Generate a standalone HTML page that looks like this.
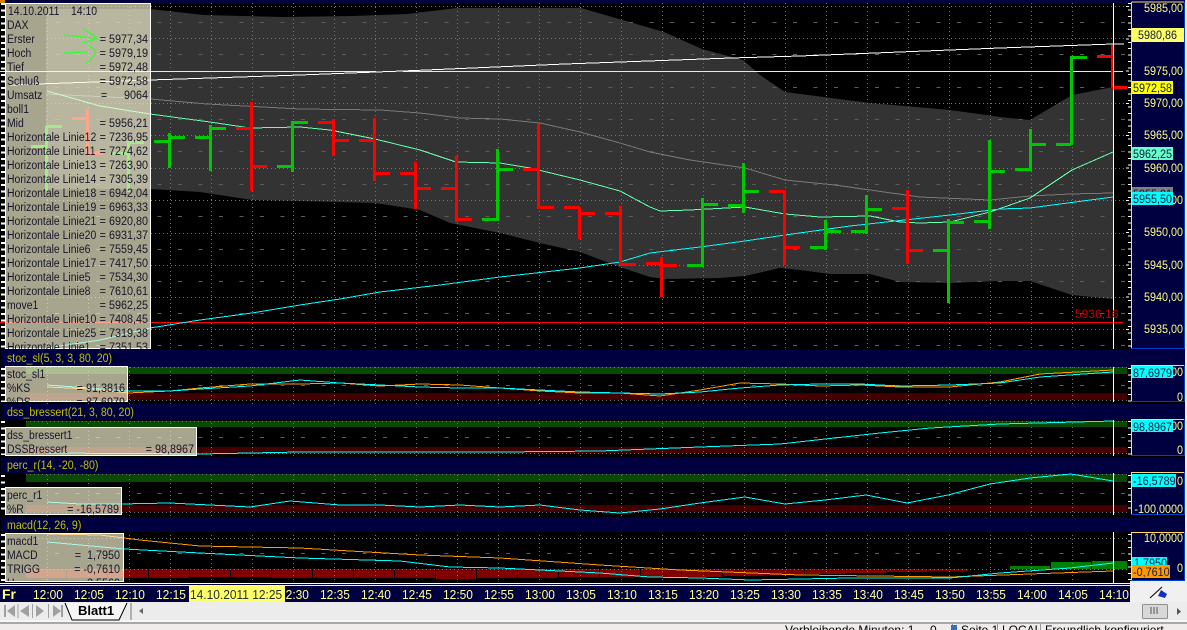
<!DOCTYPE html>
<html><head><meta charset="utf-8"><style>
html,body{margin:0;padding:0;background:#f0f0f0;width:1187px;height:630px;overflow:hidden}
svg{display:block}
text{font-family:"Liberation Sans",sans-serif;font-size:12px;transform-box:fill-box}
.l{fill:#16162a;transform-origin:left center;transform:scaleX(.87)}
.r{fill:#16162a;text-anchor:end;transform-origin:right center;transform:scaleX(.9)}
.h{fill:#c0c000;transform-origin:left center;transform:scaleX(.885)}
.a{fill:#ffff80;text-anchor:end;transform-origin:right center;transform:scaleX(.9)}
.b{fill:#102040;transform-origin:left center;transform:scaleX(.9)}
.t{fill:#ffff90;font-size:13px;text-anchor:middle;transform-origin:center;transform:scaleX(.92)}
.d{fill:#203040;font-size:13px;transform-origin:left center;transform:scaleX(.92)}
.c path,.c polyline,.c line{shape-rendering:crispEdges}
polyline{fill:none}
</style></head><body>
<svg width="1187" height="630" viewBox="0 0 1187 630" xmlns="http://www.w3.org/2000/svg">
<defs>
<clipPath id="c1"><rect x="6" y="4" width="144" height="345"/></clipPath>
<clipPath id="c2"><rect x="6" y="367" width="122" height="35"/></clipPath>
<clipPath id="c3"><rect x="6" y="534" width="118" height="47"/></clipPath>
<clipPath id="c4"><rect x="0" y="586" width="1130" height="16"/></clipPath>
</defs>
<g class="c">
<rect width="1187" height="630" fill="#f0f0f0"/>
<rect x="0" y="0" width="1185" height="583" fill="#000"/>
<rect x="0" y="0" width="1185" height="3" fill="#000040"/>
<rect x="0" y="0" width="5" height="3" fill="#e08000"/>

<!-- main band -->
<polygon fill="#333333" points="46,9 150,9 204,15 283,17 353,16 407,14 457,8 581,8 664,32 702,49 743,60 760,75 785,92 870,103 950,110 1000,117 1030,120 1072,95 1113,87 1113,299 1072,295 1030,281 1000,281 950,283 900,282 870,274 830,274 800,270 780,268 745,276 720,278 665,279 650,277 620,267 580,252 540,243 500,233 450,223 420,210 375,203 300,201 252,200 200,192 150,189 46,189"/>

<!-- indicator bands -->
<rect x="26" y="367" width="1101" height="7" fill="#0a4a00"/>
<rect x="26" y="393" width="1101" height="7" fill="#440000"/>
<rect x="26" y="421" width="1101" height="6" fill="#0a4a00"/>
<rect x="26" y="447" width="1101" height="6" fill="#440000"/>
<rect x="26" y="474" width="1101" height="8" fill="#0a4a00"/>
<rect x="26" y="505" width="1101" height="7" fill="#440000"/>

<!-- histogram -->
<path fill="#800000" d="M26 569h40v9h-40zM67 569h40v9h-40zM108 569h40v9h-40zM149 569h40v9h-40zM190 569h40v8h-40zM231 569h40v8h-40zM272 569h40v9h-40zM313 569h40v9h-40zM354 569h40v9h-40zM395 569h40v9h-40zM436 569h40v10h-40zM477 569h40v9h-40zM518 569h40v9h-40zM559 569h40v8h-40zM600 569h40v8h-40zM641 569h40v8h-40zM682 569h40v8h-40zM723 569h40v7h-40zM764 569h40v6h-40zM805 569h40v5h-40zM846 569h40v4h-40zM887 569h40v3h-40zM928 569h40v2h-40z"/>
<path fill="#008000" d="M1010 566h40v3h-40zM1051 562h40v7h-40zM1092 561h35v8h-35z"/>

<!-- grid -->
<path stroke="#777" fill="none" stroke-dasharray="1 3" d="M47.5 3V583M88.5 3V583M129.5 3V583M170.5 3V583M211.5 3V583M252.5 3V583M293.5 3V583M334.5 3V583M375.5 3V583M416.5 3V583M457.5 3V583M498.5 3V583M539.5 3V583M580.5 3V583M621.5 3V583M662.5 3V583M703.5 3V583M744.5 3V583M785.5 3V583M826.5 3V583M867.5 3V583M908.5 3V583M949.5 3V583M990.5 3V583M1031.5 3V583M1072.5 3V583"/>
<path stroke="#777" fill="none" stroke-dasharray="1 3" d="M47 6.5H1127M47 38.5H1127M47 103.5H1127M47 135.5H1127M47 168.5H1127M47 200.5H1127M47 233.5H1127M47 265.5H1127M47 297.5H1127M47 329.5H1127M26 400.5H1127M26 453.5H1127M26 367.5H1127M26 512.5H1127M26 538.5H1127M26 569.5H1127M26 421.5H1127M26 474.5H1127"/>
<path stroke="#5c5c5c" fill="none" stroke-dasharray="4 16.5" d="M55 22.5H1127M55 54.5H1127M55 87.5H1127M55 119.5H1127M55 151.5H1127M55 184.5H1127M55 216.5H1127M55 249.5H1127M55 281.5H1127M55 313.5H1127M55 345.5H1127M55 385.5H1127M55 437.5H1127M55 493.5H1127M55 553.5H1127"/>

<!-- headers -->
<rect x="1" y="350" width="1184" height="17" fill="#000040"/>
<rect x="1" y="404" width="1184" height="16" fill="#000040"/>
<rect x="1" y="457" width="1184" height="16" fill="#000040"/>
<rect x="1" y="517" width="1184" height="15" fill="#000040"/>

<!-- main white / red lines -->
<path stroke="#e8e8e8" d="M0 71.5H376M403 71.5H1123"/>
<polyline stroke="#fff" points="10,85 150,80 300,75 376,72 403,71 565,64 731,58 800,56 1000,48 1113,44 1124,44"/>
<path stroke="#ff0000" d="M0 322.5H1123"/>

<!-- moving lines -->
<polyline stroke="#787878" points="46,94 150,99 207,104 300,109 380,110 420,113 460,118 500,119 540,123 580,132 620,143 650,152 690,160 745,168 785,180 835,185 870,190 920,197 990,200 1030,196 1070,194 1113,193"/>
<polyline stroke="#66ffb0" points="47,91 100,106 150,114 210,122 250,128 300,127 330,130 375,139 420,150 456,162 500,163 530,168 580,180 620,191 650,207 660,211 690,210 745,207 785,214 820,217 870,216 900,222 920,223 950,222 990,212 1030,198 1072,170 1113,152"/>
<polyline stroke="#00ffff" points="47,348 100,340 150,328 200,320 252,313 300,305 340,299 380,292 440,285 500,277 580,268 620,262 650,253 700,247 745,241 785,235 850,226 950,215 1000,209 1030,208 1113,197"/>

<!-- OHLC bars -->
<g fill="none" stroke-width="3">
<path stroke="#00c800" d="M46.5 126V192M31 146.5H46M46 126.5H62M128.5 141V192M113 153.5H128M128 142.5H144M169.5 133V168M154 141.5H169M169 137.5H185M210.5 125V171M195 137.5H210M210 128.5H226M292.5 121V172M277 166.5H292M292 122.5H308M497.5 149V221M482 219.5H497M497 169.5H513M702.5 198V267M687 265.5H702M702 204.5H718M743.5 163V213M728 205.5H743M743 191.5H759M825.5 220V250M810 247.5H825M825 231.5H841M866.5 195V234M851 231.5H866M866 209.5H882M948.5 219V303M933 250.5H948M948 222.5H964M989.5 140V229M974 221.5H989M989 171.5H1005M1030.5 129V171M1015 169.5H1030M1030 144.5H1046M1071.5 56V145M1056 144.5H1071M1071 57.5H1087"/>
<path stroke="#ff0000" d="M87.5 109V155M72 118.5H87M87 153.5H103M251.5 102V191M236 128.5H251M251 166.5H267M333.5 119V156M318 122.5H333M333 140.5H349M374.5 118V181M359 140.5H374M374 173.5H390M415.5 162V209M400 173.5H415M415 188.5H431M456.5 156V222M441 188.5H456M456 219.5H472M538.5 124V209M523 169.5H538M538 207.5H554M579.5 207V239M564 207.5H579M579 213.5H595M620.5 206V265M605 213.5H620M620 264.5H636M661.5 257V297M646 263.5H661M661 265.5H677M784.5 190V265M769 191.5H784M784 247.5H800M907.5 190V264M892 208.5H907M907 250.5H923M1112.5 45V88M1097 56.5H1112M1112 87.5H1127"/>
</g>

<!-- sub-panel lines -->
<polyline stroke="#ff9900" points="47,387 90,389 128,393 170,391 200,388 250,384 300,384 340,383 380,386 420,384 460,385 500,388 540,391 580,393 620,393 660,396 700,390 740,383 780,384 820,386 860,385 900,387 950,387 1000,382 1040,374 1113,370"/>
<polyline stroke="#00ffff" points="47,385 90,388 128,391 170,391 200,389 250,386 300,380 340,383 380,385 420,387 460,388 500,388 540,390 580,392 620,393 660,394 700,392 740,388 780,385 820,384 860,384 900,386 950,385 1000,383 1040,377 1113,372"/>
<polyline stroke="#00ffff" points="47,453 200,454 300,452 500,452 600,451 700,447 780,444 880,433 930,428 1000,424 1113,421"/>
<polyline stroke="#00ffff" points="47,502 80,504 120,504 170,503 210,505 250,507 290,501 340,505 380,505 420,507 460,505 500,507 540,505 580,510 620,513 660,509 700,503 745,497 785,504 825,500 866,495 907,503 948,495 990,484 1030,478 1071,474 1113,481"/>
<polyline stroke="#ff9900" points="47,534 100,535 140,540 200,546 250,547 300,548 350,551 420,555 500,558 600,565 680,570 800,575 950,577 1030,574 1113,571"/>
<polyline stroke="#00ffff" points="47,542 124,549 200,553 300,558 400,561 450,567 500,568 540,570 600,573 650,577 700,578 750,580 850,578 950,578 1000,573 1070,568 1113,563"/>

<!-- cursor -->
<path stroke="#fff" d="M1113.5 3V349M1113.5 367V402M1113.5 420V456M1113.5 473V515M1113.5 532V583"/>
<path stroke="#ff0000" stroke-width="2" d="M1112 46V88"/>
</g>

<text x="1075" y="318" fill="#c00000">5936,16</text>

<!-- ticks -->
<g class="c" fill="none">
<path stroke="#fff" stroke-width="4" stroke-dasharray="2 4.46" d="M3 3V349M3 368V402M3 421V455M3 475V514M3 534V582"/>
<path stroke="#fff" stroke-width="3" stroke-dasharray="1 5.46" d="M1129.5 3V349M1129.5 368V402M1129.5 421V455M1129.5 475V514M1129.5 534V582"/>
<path stroke="#fff" stroke-width="3" stroke-dasharray="1 31.3" d="M1127.5 6V349"/>
</g>

<!-- main overlay -->
<rect x="5.5" y="3.5" width="145" height="345" fill="rgba(255,250,215,.66)" stroke="#fff" shape-rendering="crispEdges"/>
<g clip-path="url(#c1)">
<text class="l" x="8" y="15">14.10.2011</text><text class="l" x="71" y="15">14:10</text>
<text class="l" x="7" y="29">DAX</text>
<text class="l" x="7" y="43">Erster</text><text class="r" x="148" y="43">= 5977,34</text>
<text class="l" x="7" y="57">Hoch</text><text class="r" x="148" y="57">= 5979,19</text>
<text class="l" x="7" y="71">Tief</text><text class="r" x="148" y="71">= 5972,48</text>
<text class="l" x="7" y="85">Schluß</text><text class="r" x="148" y="85">= 5972,58</text>
<text class="l" x="7" y="99">Umsatz</text><text class="l" x="101" y="99">=</text><text class="r" x="148" y="99">9064</text>
<text class="l" x="7" y="113">boll1</text>
<text class="l" x="7" y="127">Mid</text><text class="r" x="148" y="127">= 5956,21</text>
<text class="l" x="7" y="141">Horizontale Linie12</text><text class="r" x="148" y="141">= 7236,95</text>
<text class="l" x="7" y="155">Horizontale Linie11</text><text class="r" x="148" y="155">= 7274,62</text>
<text class="l" x="7" y="169">Horizontale Linie13</text><text class="r" x="148" y="169">= 7263,90</text>
<text class="l" x="7" y="183">Horizontale Linie14</text><text class="r" x="148" y="183">= 7305,39</text>
<text class="l" x="7" y="197">Horizontale Linie18</text><text class="r" x="148" y="197">= 6942,04</text>
<text class="l" x="7" y="211">Horizontale Linie19</text><text class="r" x="148" y="211">= 6963,33</text>
<text class="l" x="7" y="225">Horizontale Linie21</text><text class="r" x="148" y="225">= 6920,80</text>
<text class="l" x="7" y="239">Horizontale Linie20</text><text class="r" x="148" y="239">= 6931,37</text>
<text class="l" x="7" y="253">Horizontale Linie6</text><text class="r" x="148" y="253">= 7559,45</text>
<text class="l" x="7" y="267">Horizontale Linie17</text><text class="r" x="148" y="267">= 7417,50</text>
<text class="l" x="7" y="281">Horizontale Linie5</text><text class="r" x="148" y="281">= 7534,30</text>
<text class="l" x="7" y="295">Horizontale Linie8</text><text class="r" x="148" y="295">= 7610,61</text>
<text class="l" x="7" y="309">move1</text><text class="r" x="148" y="309">= 5962,25</text>
<text class="l" x="7" y="323">Horizontale Linie10</text><text class="r" x="148" y="323">= 7408,45</text>
<text class="l" x="7" y="337">Horizontale Linie25</text><text class="r" x="148" y="337">= 7319,38</text>
<text class="l" x="7" y="351">Horizontale Linie1</text><text class="r" x="148" y="351">= 7351,53</text>
</g>
<g fill="none" stroke="#33ff33" stroke-width="1.3">
<path d="M64 35L97 38.500M83 29Q91 33 97 38.500Q90 41 82 43"/>
<path d="M64 53L88 52M88 46Q98 50 95 54Q92 59 86 63"/>
</g>

<!-- headers text -->
<text class="h" x="7" y="362">stoc_sl(5, 3, 3, 80, 20)</text>
<text class="h" x="7" y="416">dss_bressert(21, 3, 80, 20)</text>
<text class="h" x="7" y="469">perc_r(14, -20, -80)</text>
<text class="h" x="7" y="529">macd(12, 26, 9)</text>

<!-- sub overlays -->
<rect x="5.5" y="366.5" width="122" height="35" fill="rgba(255,250,215,.66)" stroke="#fff" shape-rendering="crispEdges"/>
<g clip-path="url(#c2)">
<text class="l" x="7" y="378">stoc_sl1</text>
<text class="l" x="7" y="392">%KS</text><text class="r" x="125" y="392">= 91,3816</text>
<text class="l" x="7" y="406">%DS</text><text class="r" x="125" y="406">= 87,6979</text>
</g>
<rect x="5.5" y="427.500" width="191" height="28" fill="rgba(255,250,215,.66)" stroke="#fff" shape-rendering="crispEdges"/>
<text class="l" x="7" y="439">dss_bressert1</text>
<text class="l" x="7" y="453">DSSBressert</text><text class="r" x="194" y="453">= 98,8967</text>
<rect x="5.5" y="487.500" width="116" height="27" fill="rgba(255,250,215,.66)" stroke="#fff" shape-rendering="crispEdges"/>
<text class="l" x="7" y="499">perc_r1</text>
<text class="l" x="7" y="513">%R</text><text class="r" x="119" y="513">= -16,5789</text>
<rect x="5.5" y="533.500" width="118" height="48" fill="rgba(255,250,215,.66)" stroke="#fff" shape-rendering="crispEdges"/>
<g clip-path="url(#c3)">
<text class="l" x="7" y="545">macd1</text>
<text class="l" x="7" y="559">MACD</text><text class="r" x="120" y="559">=&#160;&#160;1,7950</text>
<text class="l" x="7" y="573">TRIGG</text><text class="r" x="120" y="573">= -0,7610</text>
<text class="l" x="7" y="587">H</text><text class="r" x="120" y="587">2,5560</text>
</g>

<!-- right axes -->
<g class="c">
<rect x="1131" y="2" width="54" height="347" fill="#000040"/>
<path fill="none" stroke="#ffd870" d="M1131.5 2V349M1131.5 2H1184"/>
<path fill="none" stroke="#0040d0" d="M1184.5 2V349M1131 348.5H1185"/>
<rect x="1131" y="365" width="54" height="37" fill="#000040"/>
<path fill="none" stroke="#ffd870" d="M1131.5 365V402M1131.5 365.500H1184"/>
<path fill="none" stroke="#0040d0" d="M1184.5 365V402M1131 401.5H1185"/>
<rect x="1131" y="419" width="54" height="37" fill="#000040"/>
<path fill="none" stroke="#ffd870" d="M1131.5 419V456M1131.5 419.500H1184"/>
<path fill="none" stroke="#0040d0" d="M1184.5 419V456M1131 455.5H1185"/>
<rect x="1131" y="472" width="54" height="43" fill="#000040"/>
<path fill="none" stroke="#ffd870" d="M1131.5 472V515M1131.5 472.500H1184"/>
<path fill="none" stroke="#0040d0" d="M1184.5 472V515M1131 514.5H1185"/>
<rect x="1131" y="532" width="54" height="49" fill="#000040"/>
<path fill="none" stroke="#ffd870" d="M1131.5 532V581M1131.5 532.500H1184"/>
<path fill="none" stroke="#0040d0" d="M1184.5 532V581M1131 580.5H1185"/>
</g>

<text class="a" x="1183" y="12">5985,00</text>
<text class="a" x="1183" y="75">5975,00</text>
<text class="a" x="1183" y="107">5970,00</text>
<text class="a" x="1183" y="139">5965,00</text>
<text class="a" x="1183" y="172">5960,00</text>
<text class="a" x="1183" y="204">5955,00</text>
<text class="a" x="1183" y="236">5950,00</text>
<text class="a" x="1183" y="269">5945,00</text>
<text class="a" x="1183" y="301">5940,00</text>
<text class="a" x="1183" y="333">5935,00</text>

<rect x="1132" y="28" width="52" height="14" fill="#ffff66"/>
<text class="b" x="1138" y="39">5980,86</text>
<rect x="1132" y="81" width="41" height="13" fill="#ffff00"/>
<text class="b" x="1133" y="92">5972,58</text>
<rect x="1132" y="147" width="41" height="13" fill="#66ffcc"/>
<text class="b" x="1133" y="158">5962,25</text>
<rect x="1132" y="187" width="41" height="13" fill="#808080"/>
<text class="b" x="1133" y="198">5955,91</text>
<rect x="1132" y="192" width="41" height="13" fill="#00ffff"/>
<text class="b" x="1133" y="203">5955,50</text>

<text class="a" x="1183" y="376">100,0000</text>
<text class="a" x="1183" y="401">0</text>
<rect x="1132" y="366" width="41" height="12" fill="#00ffff"/>
<text class="b" x="1133" y="377">87,6979</text>

<text class="a" x="1183" y="430">100,0000</text>
<text class="a" x="1183" y="454">0</text>
<rect x="1132" y="420" width="41" height="12" fill="#00ffff"/>
<text class="b" x="1133" y="431">98,8967</text>

<text class="a" x="1183" y="485">0</text>
<rect x="1132" y="474" width="44" height="13" fill="#00ffff"/>
<text class="b" x="1133" y="485">-16,5789</text>
<text class="a" x="1183" y="513">-100,0000</text>

<text class="a" x="1183" y="542">10,0000</text>
<text class="a" x="1183" y="572">0</text>
<rect x="1132" y="557" width="35" height="10" fill="#00ffff"/>
<text class="b" x="1134" y="567">1,7950</text>
<rect x="1132" y="565" width="38" height="13" fill="#ff9900"/>
<text class="b" x="1133" y="576">-0,7610</text>

<!-- time axis -->
<g class="c">
<rect x="0" y="583" width="1130" height="19" fill="#000040"/>
<rect x="0" y="583" width="1130" height="1" fill="#fff"/>
<rect x="0" y="585" width="1130" height="1" fill="#ffff80"/>
<rect x="1130" y="581" width="57" height="21" fill="#f0f0f0"/>
</g>
<g clip-path="url(#c4)">
<text x="2" y="599" fill="#ffff80" style="font-size:14px;font-weight:bold">Fr</text>
<g transform="translate(1 0)">
<text class="t" x="47" y="599">12:00</text><text class="t" x="88" y="599">12:05</text><text class="t" x="129" y="599">12:10</text><text class="t" x="170" y="599">12:15</text>
<text class="t" x="293" y="599">12:30</text><text class="t" x="334" y="599">12:35</text><text class="t" x="375" y="599">12:40</text><text class="t" x="416" y="599">12:45</text><text class="t" x="457" y="599">12:50</text><text class="t" x="498" y="599">12:55</text><text class="t" x="539" y="599">13:00</text><text class="t" x="580" y="599">13:05</text><text class="t" x="621" y="599">13:10</text><text class="t" x="662" y="599">13:15</text><text class="t" x="703" y="599">13:20</text><text class="t" x="744" y="599">13:25</text><text class="t" x="785" y="599">13:30</text><text class="t" x="826" y="599">13:35</text><text class="t" x="867" y="599">13:40</text><text class="t" x="908" y="599">13:45</text><text class="t" x="949" y="599">13:50</text><text class="t" x="990" y="599">13:55</text><text class="t" x="1031" y="599">14:00</text><text class="t" x="1072" y="599">14:05</text><text class="t" x="1113" y="599">14:10</text>
</g>
<rect x="189" y="586" width="96" height="16" fill="#ffff66"/>
<text class="d" x="190" y="599">14.10.2011 12:25</text>
</g>

<!-- flag -->
<path d="M1150 598L1162 587" stroke="#000" stroke-width="1" fill="none"/>
<path d="M1161 590L1167 594L1165 598L1158 596Z" fill="#1030c0"/>

<!-- bottom tab bar -->
<g class="c">
<rect x="0" y="602" width="1187" height="18" fill="#ececec"/>
<rect x="0" y="620" width="1187" height="2" fill="#f6f6f6"/>
<rect x="0" y="622" width="1187" height="2" fill="#a8a8a8"/>
<rect x="0" y="624" width="1187" height="6" fill="#f0ecec"/>
<rect x="130" y="603" width="2" height="17" fill="#b0b0b0"/>
<rect x="1185" y="0" width="2" height="602" fill="#f0f0f0"/>
</g>
<g fill="#a0a0a0">
<rect x="4" y="605" width="2" height="12"/><path d="M15 605V617L7 611Z"/>
<path d="M29 605V617L20 611Z"/>
<path d="M36 605V617L44 611Z"/>
<path d="M53 605V617L61 611Z"/><rect x="61" y="605" width="2" height="12"/>
<rect x="17.500" y="604" width="1" height="14"/><rect x="32" y="604" width="1" height="14"/><rect x="48" y="604" width="1" height="14"/>
</g>
<path d="M65 603L72 620H119L127 603" fill="#f6f6f6" stroke="#000" stroke-width="1"/>
<text x="78" y="615" fill="#000" style="font-size:13px;font-weight:bold">Blatt1</text>
<path d="M143 608V614L139 611Z" fill="#666"/>
<rect x="1142.500" y="604.500" width="25" height="14" rx="1" fill="#d8d8d8" stroke="#909090"/>
<path d="M1151 607v7M1154 607v7M1157 607v7" stroke="#555" stroke-width="1"/>
<path d="M1177 608V615L1181 611.500Z" fill="#555"/>

<!-- status bar -->
<text x="785" y="634" fill="#000">Verbleibende Minuten: 1</text>
<text x="930" y="634" fill="#000">0</text>
<text x="961" y="634" fill="#000">Seite 1</text>
<text x="1002" y="634" fill="#000">LOCAL</text>
<text x="1045" y="634" fill="#000">Freundlich konfiguriert</text>
<path d="M952.500 624V630M997.500 624V630M1040.500 624V630" stroke="#999" shape-rendering="crispEdges"/>
<rect x="951" y="625" width="6" height="5" fill="#3070c0"/>
</svg>
</body></html>
